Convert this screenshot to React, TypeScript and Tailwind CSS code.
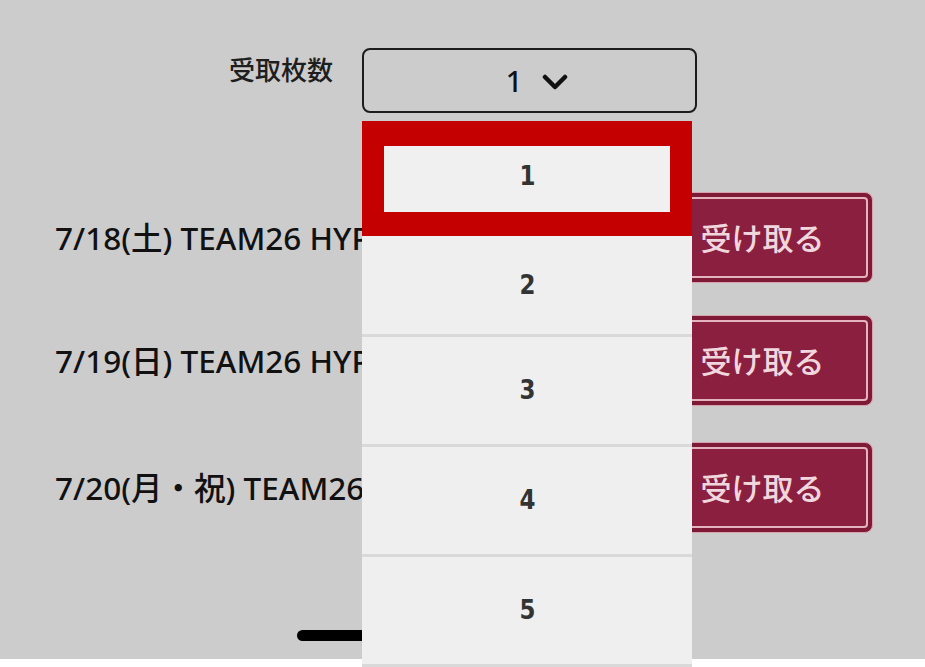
import React from "react";

const rows = [
  { text: "7/18(土) TEAM26 HYPE", gapTop: "mt-[79px]" },
  { text: "7/19(日) TEAM26 HYPE", gapTop: "mt-[32px]" },
  { text: "7/20(月・祝) TEAM26 HYPE", gapTop: "mt-[36px]" },
];

function ReceiveButton() {
  return (
    <div className="w-[217px] h-[91px] rounded-[8px] bg-[#7f1a36] border border-[#d7a1ae] p-[4px] shrink-0">
      <div className="w-full h-full rounded-[4px] border-2 border-[#e4b3be] bg-[#8a1f3f] flex items-center justify-center pr-[4px] text-[31px] font-medium text-[#f0d6dd] font-['Noto_Sans_CJK_JP','Noto_Sans',sans-serif]">
        受け取る
      </div>
    </div>
  );
}

export default function App() {
  return (
    <div className="w-[925px] h-[667px] bg-white overflow-hidden relative font-['Noto_Sans','Noto_Sans_CJK_JP',sans-serif]">
      <div className="h-[659px] bg-[#cccccc] relative">
        {/* top: label + select */}
        <div className="flex items-start pt-[48px] pl-[229px]">
          <div className="text-[26px] leading-[39px] mt-[1px] text-[#1e1e1e] font-medium font-['Noto_Sans_CJK_JP',sans-serif] w-[133px]">
            受取枚数
          </div>
          <div className="w-[335px] h-[65px] border-2 border-[#1c1c1c] rounded-[8px] flex items-center justify-center pl-[15px] gap-[20px]">
            <span className="text-[29px] leading-none text-[#111] font-medium">1</span>
            <svg width="26" height="16" viewBox="0 0 26 16" className="mt-[2px]">
              <polyline points="3,3 13,13 23,3" fill="none" stroke="#111" strokeWidth="4.5" strokeLinecap="round" strokeLinejoin="round" />
            </svg>
          </div>
        </div>

        {/* event rows */}
        <div className="flex flex-col">
          {rows.map((r) => (
            <div key={r.text} className={`${r.gapTop} flex items-center pl-[55px] pr-[52px] justify-between`}>
              <span className="text-[31.5px] text-[#111] font-medium whitespace-nowrap leading-none">{r.text}</span>
              <ReceiveButton />
            </div>
          ))}
        </div>

        {/* home indicator */}
        <div className="absolute left-[297px] top-[630px] w-[330px] h-[11px] rounded-full bg-black" />
      </div>

      {/* open dropdown list overlay */}
      <div className="absolute left-[362px] top-[121px] w-[330px] bg-[#efefef] font-['DejaVu_Sans',sans-serif] font-bold text-[27px] text-[#333]">
        <div className="bg-[#c40000] pt-[25px] pb-[24px] px-[22px]">
          <div className="h-[66px] bg-[#f0f0f0] flex items-center justify-center pb-[6px]">
            <span className="inline-block scale-x-[0.85]">1</span>
          </div>
        </div>
        <div className="h-[101px] border-b-[3px] border-[#d9d9d9] flex items-center justify-center">
          <span className="inline-block scale-x-[0.85]">2</span>
        </div>
        <div className="h-[110px] border-b-[3px] border-[#d9d9d9] flex items-center justify-center">
          <span className="inline-block scale-x-[0.85]">3</span>
        </div>
        <div className="h-[110px] border-b-[3px] border-[#d9d9d9] flex items-center justify-center">
          <span className="inline-block scale-x-[0.85]">4</span>
        </div>
        <div className="h-[110px] border-b-[3px] border-[#d9d9d9] flex items-center justify-center">
          <span className="inline-block scale-x-[0.85]">5</span>
        </div>
      </div>
    </div>
  );
}
